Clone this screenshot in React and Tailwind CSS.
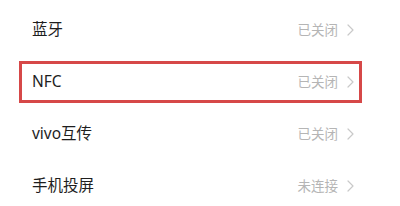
const rows = [
  { label: '蓝牙', status: '已关闭' },
  { label: 'NFC', status: '已关闭', marked: true },
  { label: 'vivo互传', status: '已关闭' },
  { label: '手机投屏', status: '未连接' },
]

function Chevron() {
  return (
    <svg width="7" height="12" viewBox="0 0 7 12" fill="none" className="ml-[9px]">
      <path d="M1 1l5 5-5 5" stroke="#c9c9c9" strokeWidth="1.2" strokeLinecap="round" strokeLinejoin="round" />
    </svg>
  )
}

export default function App() {
  return (
    <div
      className="h-[206px] w-[400px] overflow-hidden bg-white pt-[4px]"
      style={{ fontFamily: '"Noto Sans", "Noto Sans CJK SC", sans-serif' }}
    >
      {rows.map((r) => (
        <div key={r.label} className="flex h-[52px] items-center pl-[19px] pr-[38px]">
          <div
            className={
              'flex h-[42px] w-full items-center ' +
              (r.marked ? 'border-[3px] border-[#d64848] pl-[10px] pr-[5px]' : 'pl-[13px] pr-[8px]')
            }
          >
            <span className="text-[15.5px] text-[#1e1e1e]">{r.label}</span>
            <span className="ml-auto text-[13.5px] text-[#b5b5b5]">{r.status}</span>
            <Chevron />
          </div>
        </div>
      ))}
    </div>
  )
}
